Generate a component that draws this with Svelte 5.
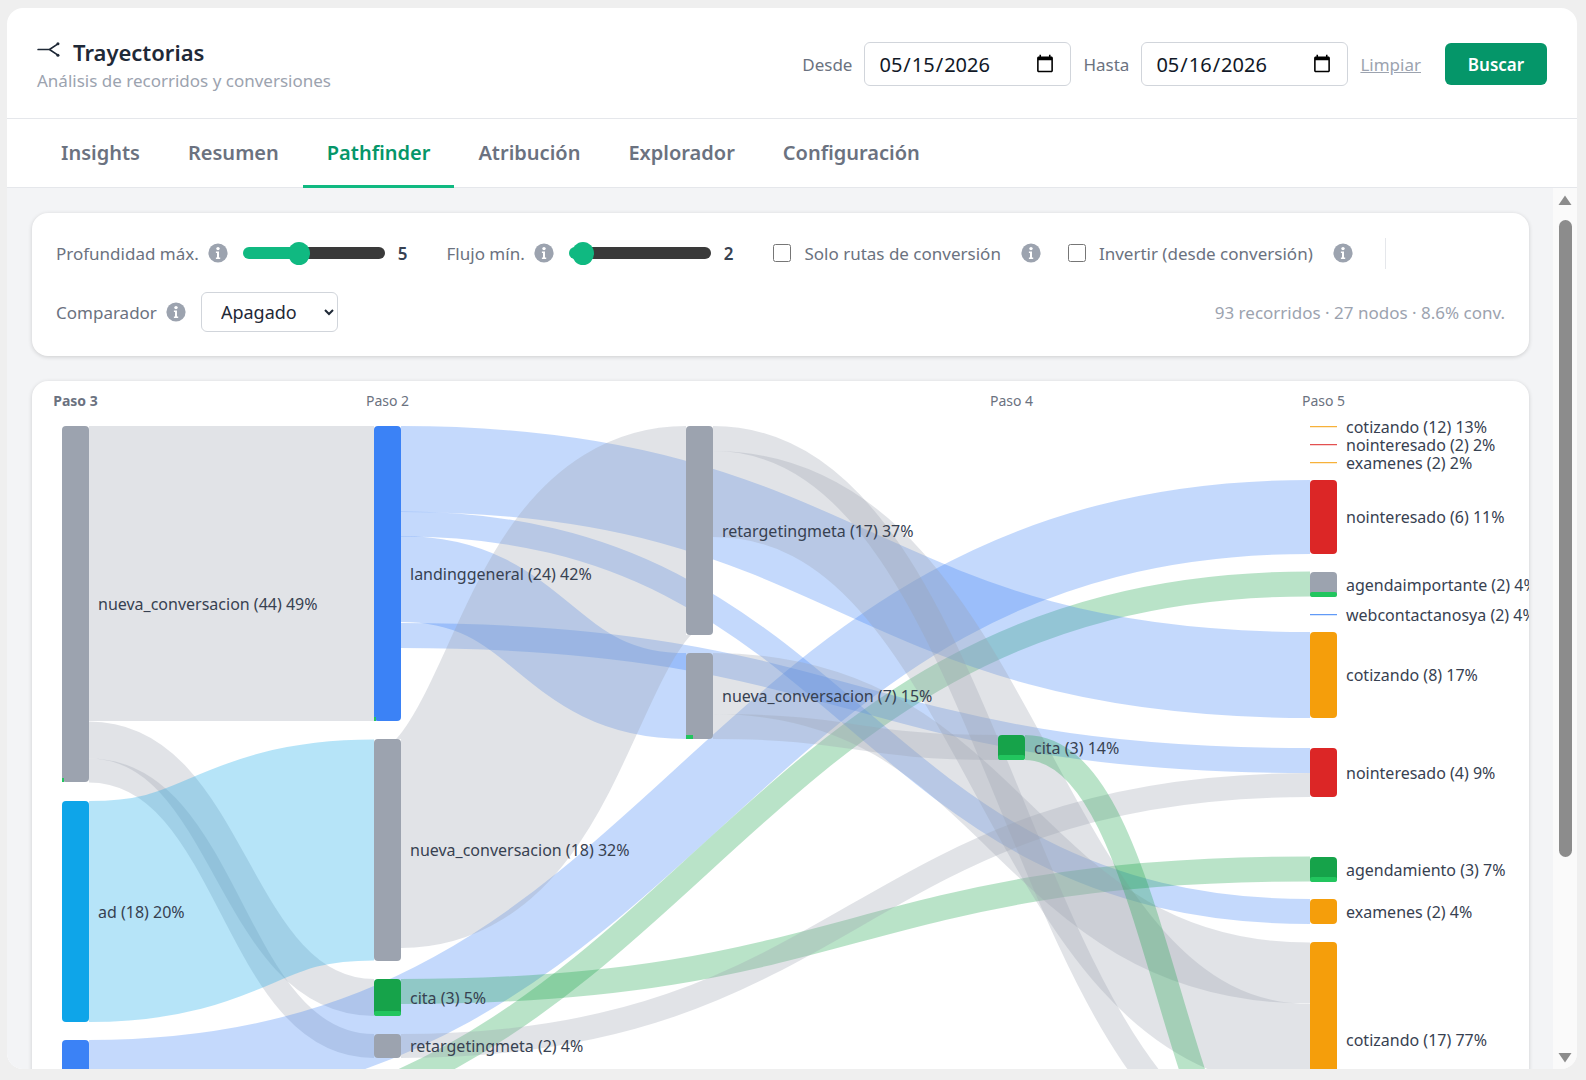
<script>
  const grey = '#9ca3af', blue = '#3b82f6', sky = '#0ea5e9', green = '#16a34a', red = '#dc2626', amber = '#f59e0b';
  const links = [
    [89, 574.5, 374, 574.5, 295, grey],
    [89, 741, 374, 998.5, 37, grey],
    [89, 771.5, 374, 1047, 24, grey],
    [89, 912.5, 374, 851, 221, sky],
    [89, 1078, 1310, 518, 74, blue],
    [89, 1145, 1310, 585, 25, green],
    [401, 470, 1310, 676, 86, blue],
    [401, 525, 1310, 912.5, 25, blue],
    [401, 580, 686, 697, 86, blue],
    [401, 636.5, 1310, 761.5, 25, blue],
    [401, 844.5, 686, 531.5, 209, grey],
    [401, 992.5, 1310, 870, 25, green],
    [401, 1047, 1310, 786, 24, grey],
    [713, 439.5, 1310, 1170, 25, grey],
    [713, 495, 1310, 1048, 86, grey],
    [713, 684.5, 1310, 974, 61, grey],
    [713, 727.5, 998, 748.5, 25, grey],
    [1025, 748.5, 1310, 1232, 25, green]
  ];
  const linkPath = ([x0, y0, x1, y1]) => {
    const m = (x0 + x1) / 2;
    return `M${x0},${y0}C${m},${y0} ${m},${y1} ${x1},${y1}`;
  };
  const nodes = [
    { x: 62, y: 427, h: 356, c: grey, t: 'nueva_conversacion (44) 49%', dot: [0, 352, 2, 4] },
    { x: 62, y: 802, h: 221, c: sky, t: 'ad (18) 20%' },
    { x: 62, y: 1041, h: 74, c: blue, t: '' },
    { x: 374, y: 427, h: 295, c: blue, t: 'landinggeneral (24) 42%', dot: [0, 718, 2, 4] },
    { x: 374, y: 740, h: 222, c: grey, t: 'nueva_conversacion (18) 32%' },
    { x: 374, y: 980, h: 37, c: green, t: 'cita (3) 5%', base: 5 },
    { x: 374, y: 1035, h: 24, c: grey, t: 'retargetingmeta (2) 4%' },
    { x: 686, y: 427, h: 209, c: grey, t: 'retargetingmeta (17) 37%' },
    { x: 686, y: 654, h: 86, c: grey, t: 'nueva_conversacion (7) 15%', dot: [0, 82, 7, 4] },
    { x: 998, y: 736, h: 25, c: green, t: 'cita (3) 14%', base: 5 },
    { x: 1310, y: 427.2, h: 1, c: amber, t: 'cotizando (12) 13%' },
    { x: 1310, y: 445.2, h: 1, c: red, t: 'nointeresado (2) 2%' },
    { x: 1310, y: 463.2, h: 1, c: amber, t: 'examenes (2) 2%' },
    { x: 1310, y: 481, h: 74, c: red, t: 'nointeresado (6) 11%' },
    { x: 1310, y: 573, h: 25, c: grey, t: 'agendaimportante (2) 4%', base: 5 },
    { x: 1310, y: 615.2, h: 1, c: blue, t: 'webcontactanosya (2) 4%' },
    { x: 1310, y: 633, h: 86, c: amber, t: 'cotizando (8) 17%' },
    { x: 1310, y: 749, h: 49, c: red, t: 'nointeresado (4) 9%' },
    { x: 1310, y: 858, h: 25, c: green, t: 'agendamiento (3) 7%', base: 5 },
    { x: 1310, y: 900, h: 25, c: amber, t: 'examenes (2) 4%' },
    { x: 1310, y: 943, h: 196, c: amber, t: 'cotizando (17) 77%' }
  ];
  const steps = [
    { x: 75.5, t: 'Paso 3', strong: true },
    { x: 387.5, t: 'Paso 2' },
    { x: 1011.5, t: 'Paso 4' },
    { x: 1323.5, t: 'Paso 5' }
  ];
  const tabs = ['Insights', 'Resumen', 'Pathfinder', 'Atribución', 'Explorador', 'Configuración'];
  // chart origin in page coordinates
  const ox = 32, oy = 382;
</script>

{#snippet info()}
  <svg class="info" viewBox="0 0 20 20" aria-hidden="true">
    <circle cx="10" cy="10" r="9.6" fill="#9ca3af" />
    <circle cx="10" cy="5.6" r="1.7" fill="#fff" />
    <path d="M7.9 8.4h3.1v6h1.2v1.7H7.9v-1.7h1.1v-4.3H7.9z" fill="#fff" />
  </svg>
{/snippet}

<div class="frame">
  <header class="top">
    <div class="brand">
      <h1>
        <svg class="route" viewBox="0 0 24 18" aria-hidden="true">
          <path d="M1 9H13L22 3M13 9l9 6" fill="none" stroke="#1f2937" stroke-width="1.8" stroke-linecap="round" stroke-linejoin="round" />
          <circle cx="22" cy="3" r="1.6" fill="#1f2937" />
          <circle cx="22" cy="15" r="1.6" fill="#1f2937" />
        </svg>
        <span>Trayectorias</span>
      </h1>
      <p>Análisis de recorridos y conversiones</p>
    </div>
    <div class="filters">
      <span class="flabel">Desde</span>
      <input class="date" type="date" value="2026-05-15" />
      <span class="flabel">Hasta</span>
      <input class="date" type="date" value="2026-05-16" />
      <a class="clear" href="#top">Limpiar</a>
      <button class="search">Buscar</button>
    </div>
  </header>

  <nav class="tabs">
    {#each tabs as tab}
      <button class="tab" class:active={tab === 'Pathfinder'}>{tab}</button>
    {/each}
  </nav>

  <div class="body">
    <main class="scroll">
      <section class="card controls">
        <div class="row">
          <label class="ctl">Profundidad máx. {@render info()}
            <input class="range" type="range" min="2" max="10" value="5" style="--p:37.5%" />
            <b>5</b>
          </label>
          <label class="ctl flow">Flujo mín. {@render info()}
            <input class="range" type="range" min="1" max="40" value="2" style="--p:10%" />
            <b>2</b>
          </label>
          <label class="ctl chk1"><input class="check" type="checkbox" /><span>Solo rutas de conversión</span>{@render info()}</label>
          <label class="ctl chk2"><input class="check" type="checkbox" /><span>Invertir (desde conversión)</span>{@render info()}</label>
          <i class="divider"></i>
        </div>
        <div class="row second">
          <label class="ctl">Comparador {@render info()}
            <select class="sel"><option>Apagado</option></select>
          </label>
          <span class="stats">93 recorridos · 27 nodos · 8.6% conv.</span>
        </div>
      </section>

      <section class="card chart">
        <svg class="sankey" width="1497" height="820" viewBox="{ox} {oy} 1497 820">
          {#each steps as s}
            <text class="step" class:strong={s.strong} x={s.x} y="401" text-anchor="middle" dominant-baseline="central">{s.t}</text>
          {/each}
          {#each links as l}
            <path d={linkPath(l)} fill="none" stroke={l[5]} stroke-width={l[4]} stroke-opacity="0.3" />
          {/each}
          {#each nodes as n}
            <rect x={n.x} y={n.y} width="27" height={n.h} rx={n.h > 2 ? 4 : 0} fill={n.c} />
            {#if n.base}
              <rect x={n.x} y={n.y + n.h - n.base} width="27" height={n.base} rx="2" fill="#22c55e" />
            {/if}
            {#if n.dot}
              <rect x={n.x + n.dot[0]} y={n.dot[1] + (n.x === 374 ? 0 : 427) - (n.x === 686 ? -227 : 0)} width={n.dot[2]} height={n.dot[3]} fill="#22c55e" />
            {/if}
            {#if n.t}
              <text class="lbl" x={n.x + 36} y={n.y + n.h / 2} dominant-baseline="central">{n.t}</text>
            {/if}
          {/each}
        </svg>
      </section>
    </main>
    <aside class="bar" aria-hidden="true">
      <svg class="arrow" viewBox="0 0 14 10"><path d="M7 0.5 13.5 10H.5z" fill="#8c8c8c" /></svg>
      <div class="lane"><div class="thumb"></div></div>
      <svg class="arrow" viewBox="0 0 14 10"><path d="M.5 0H13.5L7 9.5z" fill="#8c8c8c" /></svg>
    </aside>
  </div>
</div>

<style>
  :global(body) { margin: 0; background: #efefef; font-family: "Noto Sans", sans-serif; }
  .frame { margin: 8px 0 0 7px; width: 1570px; height: 1061px; background: #fff; border-radius: 16px; overflow: hidden; display: flex; flex-direction: column; }
  .top { height: 111px; box-sizing: border-box; border-bottom: 1px solid #e5e7eb; display: flex; justify-content: space-between; align-items: flex-start; padding: 0 30px; flex: none; }
  .brand h1 { margin: 29px 0 0; font-size: 22px; line-height: 30px; font-weight: 600; color: #1f2937; display: flex; align-items: center; gap: 13px; }
  .route { width: 23px; height: 17px; margin-top: -5px; }
  .brand p { margin: 2px 0 0; font-size: 17px; line-height: 24px; color: #9ca3af; }
  .filters { margin-top: 34px; display: flex; align-items: center; }
  .flabel { font-size: 17px; color: #6b7280; margin-right: 12px; }
  .date { width: 207px; height: 44px; box-sizing: border-box; border: 1px solid #d1d5db; border-radius: 6px; padding: 0 13px; font: 20px "Noto Sans", sans-serif; color: #111827; background: #fff; margin-right: 12px; }
  .clear { font-size: 17px; color: #9ca3af; margin: 0 24px 0 0; }
  .search { width: 102px; height: 42px; border: 0; border-radius: 6px; background: #059669; color: #fff; font: 600 17px "Noto Sans", sans-serif; }
  .tabs { height: 69px; box-sizing: border-box; border-bottom: 1px solid #e5e7eb; display: flex; padding-left: 30px; flex: none; }
  .tab { height: 69px; padding: 0 24px; border: 0; border-bottom: 3px solid transparent; background: none; font: 600 20px "Noto Sans", sans-serif; color: #6b7280; }
  .tab.active { color: #059669; border-bottom-color: #10b981; }
  .body { flex: 1; min-height: 0; display: flex; background: #f3f4f6; }
  .scroll { width: 1546px; overflow: hidden; padding: 25px 24px 0 25px; box-sizing: border-box; flex: none; }
  .card { background: #fff; border-radius: 16px; box-shadow: 0 1px 4px rgba(0, 0, 0, .16); }
  .controls { height: 143px; box-sizing: border-box; padding: 24px 24px 0; }
  .row { display: flex; align-items: center; height: 32px; }
  .row.second { height: 40px; margin-top: 23px; justify-content: space-between; }
  .ctl { display: flex; align-items: center; font-size: 17px; color: #6b7280; }
  .info { width: 20px; height: 20px; margin-left: 9px; flex: none; }
  .ctl b { font-weight: 600; color: #374151; font-size: 17px; margin-left: 13px; }
  .range { appearance: none; -webkit-appearance: none; width: 142px; height: 12px; margin: 0 0 0 15px; border-radius: 6px; background: linear-gradient(to right, #10b981 var(--p), #3a3a3a var(--p)); }
  .range::-webkit-slider-thumb { -webkit-appearance: none; width: 22px; height: 23px; border-radius: 50%; background: #10b981; border: 0; }
  .flow { margin-left: 39px; }
  .chk1 { margin-left: 40px; }
  .chk2 { margin-left: 27px; }
  .chk1 span, .chk2 span { margin-left: 13px; }
  .chk1 .info, .chk2 .info { margin-left: 20px; }
  .check { width: 18px; height: 18px; margin: 0; }
  .divider { width: 1px; height: 31px; background: #e5e7eb; margin-left: 32px; }
  .sel { width: 137px; height: 40px; margin-left: 15px; border: 1px solid #d1d5db; border-radius: 6px; padding: 0 0 0 15px; background: #fff; font: 18px "Noto Sans", sans-serif; color: #1f2937; }
  .stats { font-size: 17px; color: #9ca3af; }
  .chart { margin-top: 25px; height: 820px; overflow: hidden; }
  .sankey { display: block; }
  .step { font-size: 14px; fill: #6b7280; }
  .step.strong { font-weight: 700; }
  .lbl { font-size: 16px; fill: #374151; }
  .bar { width: 24px; flex: none; background: #fafafa; display: flex; flex-direction: column; align-items: center; }
  .arrow { width: 14px; height: 10px; margin-top: 7px; flex: none; }
  .lane { flex: 1; padding: 15px 0 0; margin-bottom: 0; min-height: 0; }
  .thumb { width: 13px; height: 637px; background: #8c8c8c; border-radius: 7px; }
  .bar .arrow:last-child { margin: 0 0 6px; }
</style>
